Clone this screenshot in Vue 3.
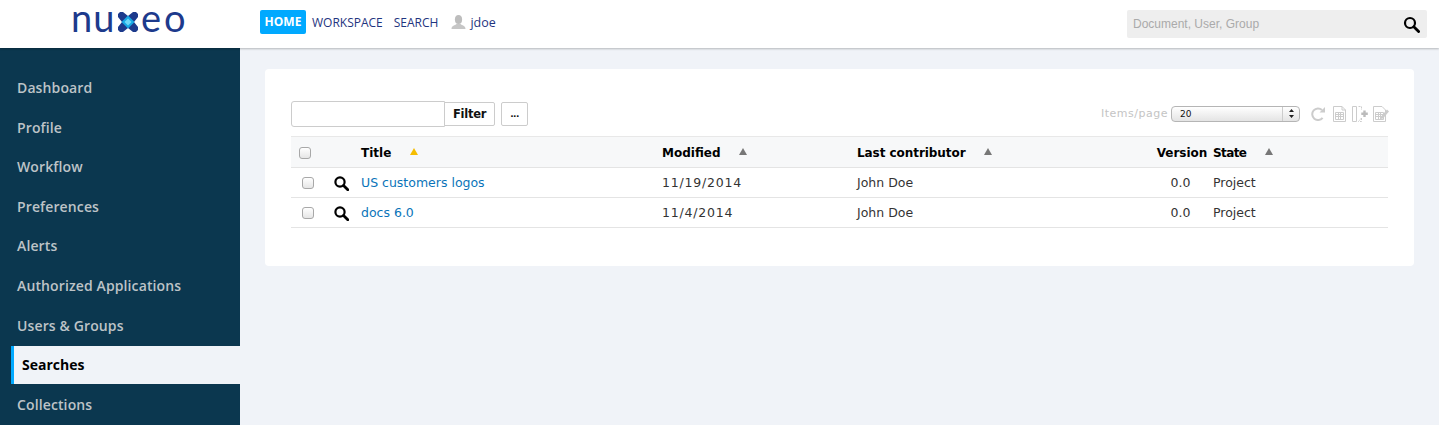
<script setup>
const menu = [
  { label: 'Dashboard' },
  { label: 'Profile' },
  { label: 'Workflow' },
  { label: 'Preferences' },
  { label: 'Alerts' },
  { label: 'Authorized Applications' },
  { label: 'Users & Groups' },
  { label: 'Searches', active: true },
  { label: 'Collections' },
]
const rows = [
  { title: 'US customers logos', modified: '11/19/2014', contributor: 'John Doe', version: '0.0', state: 'Project' },
  { title: 'docs 6.0', modified: '11/4/2014', contributor: 'John Doe', version: '0.0', state: 'Project' },
]
</script>

<template>
  <div class="page">
    <header class="topbar">
      <div class="logo">
        <svg width="120" height="40" viewBox="0 0 120 40">
          <text class="logo-text" x="0" y="32">nu</text>
          <g transform="translate(47 12)">
            <path d="M0 2 L2 0 H5 L10 4 L15 0 H18 L20 2 V5 L16 10 L20 15 V18 L18 20 H15 L10 16 L5 20 H2 L0 18 V15 L4 10 L0 5 Z" fill="#1d3a8c"/>
            <path d="M10 3.5 L16.5 10 L10 16.5 L3.5 10 Z" fill="#18a8e4"/>
            <path d="M10 6.5 L13.5 10 L10 13.5 L6.5 10 Z" fill="#6fd8f7"/>
          </g>
          <text class="logo-text wide" x="70" y="32">eo</text>
        </svg>
      </div>
      <nav class="nav">
        <a class="nav-home">HOME</a>
        <a class="nav-link workspace">WORKSPACE</a>
        <a class="nav-link search">SEARCH</a>
        <span class="user">
          <svg width="15" height="14" viewBox="0 0 15 14">
            <ellipse cx="7.5" cy="4.5" rx="3.6" ry="4.5" fill="#bdbdbd"/>
            <path d="M0.5 14 C0.5 10.5 4 10.5 5.5 9 H9.5 C11 10.5 14.5 10.5 14.5 14 Z" fill="#c6c6c6"/>
          </svg>
          <span>jdoe</span>
        </span>
      </nav>
      <div class="global-search">
        <span>Document, User, Group</span>
        <svg width="17" height="17" viewBox="0 0 17 17">
          <circle cx="7" cy="7" r="5" fill="none" stroke="#000" stroke-width="2.2"/>
          <path d="M10.8 10.8 L15.6 15.6" stroke="#000" stroke-width="2.8" stroke-linecap="round"/>
        </svg>
      </div>
    </header>

    <div class="body">
      <aside class="sidebar">
        <a v-for="m in menu" :key="m.label" class="menu-item" :class="{ active: m.active }">{{ m.label }}</a>
      </aside>

      <main class="main">
        <section class="card">
          <div class="toolbar">
            <div class="filter">
              <div class="filter-input"></div>
              <button class="btn filter-btn">Filter</button>
              <button class="btn more-btn">...</button>
            </div>
            <div class="tools">
              <span class="items-label">Items/page</span>
              <div class="select">
                <span class="select-value">20</span>
                <span class="select-arrows">
                  <svg width="5" height="9" viewBox="0 0 5 9">
                    <path d="M2.5 0 L5 3 H0 Z M2.5 9 L5 6 H0 Z" fill="#222"/>
                  </svg>
                </span>
              </div>
              <svg class="tool refresh" width="14" height="14" viewBox="0 0 14 14">
                <path d="M11.6 10.8 A5.8 5.8 0 1 1 11 3" fill="none" stroke="#ccc" stroke-width="2"/>
                <path d="M8.5 5.6 L14 5.6 L14 0 Z" fill="#ccc"/>
              </svg>
              <svg class="tool doc" width="15" height="16" viewBox="0 0 15 16">
                <path d="M1.5 .5 H10 L13.5 4 V15.5 H1.5 Z" fill="#fff" stroke="#ccc"/>
                <path d="M10 .5 V4 H13.5" fill="none" stroke="#ccc"/>
                <path d="M3.5 6.5 H11.5 V13.5 H3.5 Z M3.5 8.5 H11.5 M3.5 10.5 H11.5 M6.5 6.5 V13.5 M8.5 6.5 V13.5" fill="none" stroke="#ccc"/>
              </svg>
              <svg class="tool cols" width="16" height="16" viewBox="0 0 16 16">
                <path d="M.5 .5 H4.5 V15.5 H.5 Z" fill="none" stroke="#ccc"/>
                <path d="M6.5 .5 H9.5 V4 M9.5 12 V15.5 H6.5 Z" fill="none" stroke="#ccc" stroke-dasharray="2 1"/>
                <path d="M12.5 4.5 V11 M9.3 7.8 H15.8" stroke="#bbb" stroke-width="2.4"/>
              </svg>
              <svg class="tool cols" width="16" height="16" viewBox="0 0 16 16">
                <path d="M.5 .5 H9 L12.5 4 V15.5 H.5 Z" fill="#fff" stroke="#ccc"/>
                <path d="M2.5 6.5 H10.5 V13.5 H2.5 Z M2.5 8.5 H10.5 M2.5 10.5 H10.5 M5.5 6.5 V13.5 M7.5 6.5 V13.5" fill="none" stroke="#ccc"/>
                <path d="M8 10.5 L14 3.5 L16 5.5 L10 12.5 L7.5 13 Z" fill="#ccc"/>
              </svg>
            </div>
          </div>

          <div class="table">
            <div class="tr th">
              <div class="cell check-cell head-check"><span class="checkbox"></span></div>
              <div class="cell">Title<i class="sort gold"></i></div>
              <div class="cell">Modified<i class="sort"></i></div>
              <div class="cell tight">Last contributor<i class="sort"></i></div>
              <div class="cell center">Version</div>
              <div class="cell state-head">State<i class="sort"></i></div>
            </div>
            <div v-for="r in rows" :key="r.title" class="tr body-row">
              <div class="cell check-cell">
                <span class="checkbox"></span>
                <svg class="mag" width="15" height="15" viewBox="0 0 15 15">
                  <circle cx="6" cy="6" r="4.6" fill="none" stroke="#000" stroke-width="2.2"/>
                  <path d="M9.5 9.5 L13.8 13.8" stroke="#000" stroke-width="2.8" stroke-linecap="round"/>
                </svg>
              </div>
              <div class="cell link">{{ r.title }}</div>
              <div class="cell date">{{ r.modified }}</div>
              <div class="cell">{{ r.contributor }}</div>
              <div class="cell center">{{ r.version }}</div>
              <div class="cell">{{ r.state }}</div>
            </div>
          </div>
        </section>
      </main>
    </div>
  </div>
</template>

<style>
html, body { margin: 0; overflow: hidden; background: #f0f3f8; }
</style>

<style scoped>
.page {
  width: 1439px;
  height: 425px;
  overflow: hidden;
  display: flex;
  flex-direction: column;
  font-family: "DejaVu Sans", sans-serif;
  background: #f0f3f8;
}

.topbar {
  height: 48px;
  flex: none;
  background: #fff;
  display: flex;
  align-items: center;
  box-shadow: 0 1px 2px rgba(0, 0, 0, .25);
  position: relative;
  z-index: 1;
}
.logo {
  width: 260px;
  height: 48px;
  flex: none;
  box-sizing: border-box;
  padding: 0 0 0 71px;
  display: flex;
  align-items: flex-start;
}
.logo-text {
  font-family: Lato, sans-serif;
  font-size: 38px;
  fill: #1d3a8c;
  letter-spacing: 1px;
}
.logo-text.wide { letter-spacing: 3px; }

.nav {
  display: flex;
  align-items: center;
  font-family: "Open Sans", sans-serif;
  font-size: 12px;
  color: #1f3580;
  margin-top: -4px;
}
.nav-home {
  width: 46px;
  height: 24px;
  line-height: 24px;
  text-align: center;
  background: #00a9ff;
  color: #fff;
  font-weight: 700;
  border-radius: 2px;
}
.workspace { margin-left: 6px; }
.search { margin-left: 11px; }
.user {
  margin-left: 13px;
  display: flex;
  align-items: center;
  gap: 4px;
  font-size: 12.5px;
}
.global-search {
  margin-left: auto;
  margin-right: 12px;
  width: 300px;
  height: 28px;
  box-sizing: border-box;
  padding: 0 7px 0 6px;
  background: #eee;
  border-radius: 2px;
  display: flex;
  align-items: center;
  justify-content: space-between;
  font-family: "Liberation Sans", sans-serif;
  font-size: 12px;
  color: #aaa;
}

.body {
  flex: 1;
  display: flex;
  min-height: 0;
}
.sidebar {
  width: 240px;
  flex: none;
  background: #0b374f;
  padding-top: 20px;
  box-sizing: border-box;
  display: flex;
  flex-direction: column;
}
.menu-item {
  height: 39.6px;
  line-height: 39.6px;
  padding-left: 17px;
  font-family: "Open Sans", sans-serif;
  font-weight: 600;
  font-size: 14px;
  letter-spacing: .12px;
  color: #bdc3c7;
  flex: none;
}
.menu-item.active {
  margin-left: 11px;
  margin-top: .8px;
  margin-bottom: .8px;
  height: 38px;
  line-height: 38px;
  padding-left: 8px;
  border-left: 3px solid #00a9ff;
  background: #f0f3f8;
  color: #000;
  font-weight: 700;
  letter-spacing: 0;
}

.main {
  flex: 1;
  padding: 21px 25px 0;
  min-width: 0;
}
.card {
  background: #fff;
  border-radius: 4px;
  height: 197px;
  box-sizing: border-box;
  padding: 32px 26px 0;
}
.toolbar {
  height: 26px;
  display: flex;
  align-items: center;
  justify-content: space-between;
}
.filter { display: flex; align-items: center; }
.filter-input {
  width: 152px;
  height: 24px;
  border: 1px solid #ccc;
  border-radius: 3px 0 0 3px;
  background: #fff;
}
.btn {
  height: 24px;
  box-sizing: border-box;
  padding: 0;
  border: 1px solid #ccc;
  background: #fff;
  font-family: "DejaVu Sans", sans-serif;
  font-weight: 700;
  font-size: 11.5px;
  letter-spacing: -.25px;
  color: #111;
  border-radius: 2px;
}
.filter-btn { width: 51px; margin-left: -1px; border-radius: 0 2px 2px 0; }
.more-btn {
  width: 27px;
  margin-left: 6px;
  font-size: 9px;
  letter-spacing: -.6px;
  line-height: 12px;
}

.tools {
  display: flex;
  align-items: center;
  margin-top: -1px;
  margin-right: -1px;
}
.items-label {
  font-size: 11px;
  letter-spacing: .5px;
  color: #c4c4c4;
  margin-right: 3px;
}
.select {
  width: 129px;
  height: 16px;
  box-sizing: border-box;
  border: 1px solid #b5b5b5;
  border-radius: 4px;
  background: linear-gradient(#fff, #e4e4e4);
  display: flex;
  align-items: center;
  justify-content: space-between;
  font-size: 9px;
  color: #111;
}
.select-value { padding-left: 8px; }
.select-arrows {
  width: 16px;
  height: 100%;
  border-left: 1px solid #ccc;
  display: flex;
  align-items: center;
  justify-content: center;
}
.tool { flex: none; }
.refresh { margin-left: 11px; }
.doc { margin-left: 7px; }
.cols { margin-left: 5px; }

.table {
  margin-top: 9px;
  border-top: 1px solid #e8e8e8;
  font-size: 12px;
  color: #333;
}
.tr {
  height: 30px;
  box-sizing: border-box;
  display: grid;
  grid-template-columns: 70px 301px 195px 299px 52px 1fr;
  align-items: center;
  border-bottom: 1px solid #e4e4e4;
}
.body-row { font-size: 12.5px; }
.th {
  height: 31px;
  padding-top: 1px;
  background: #f7f8f9;
  color: #000;
  font-weight: 700;
}
.cell { display: flex; align-items: center; white-space: nowrap; }
.center { justify-content: center; }
.body-row .center { padding-right: 3px; }
.tr .cell:nth-child(6) { padding-left: 5px; }
.link { color: #0a74b9; }
.date { letter-spacing: .8px; }
.tight { letter-spacing: -.06px; }
.state-head { letter-spacing: -.6px; }
.state-head .sort { margin-left: 19px; }
.check-cell { padding-left: 11px; }
.head-check { padding-left: 8px; }
.mag { margin-left: 20px; margin-top: 2px; }
.checkbox {
  width: 12px;
  height: 12px;
  box-sizing: border-box;
  border: 1px solid #a8a8a8;
  border-radius: 3px;
  background: linear-gradient(#fff, #e6e6e6);
}
.sort {
  width: 0;
  height: 0;
  margin-left: 18px;
  margin-top: -2px;
  border-left: 4.5px solid transparent;
  border-right: 4.5px solid transparent;
  border-bottom: 7px solid #777;
}
.sort.gold { border-bottom-color: #f5bd00; margin-left: 19px; }
</style>
